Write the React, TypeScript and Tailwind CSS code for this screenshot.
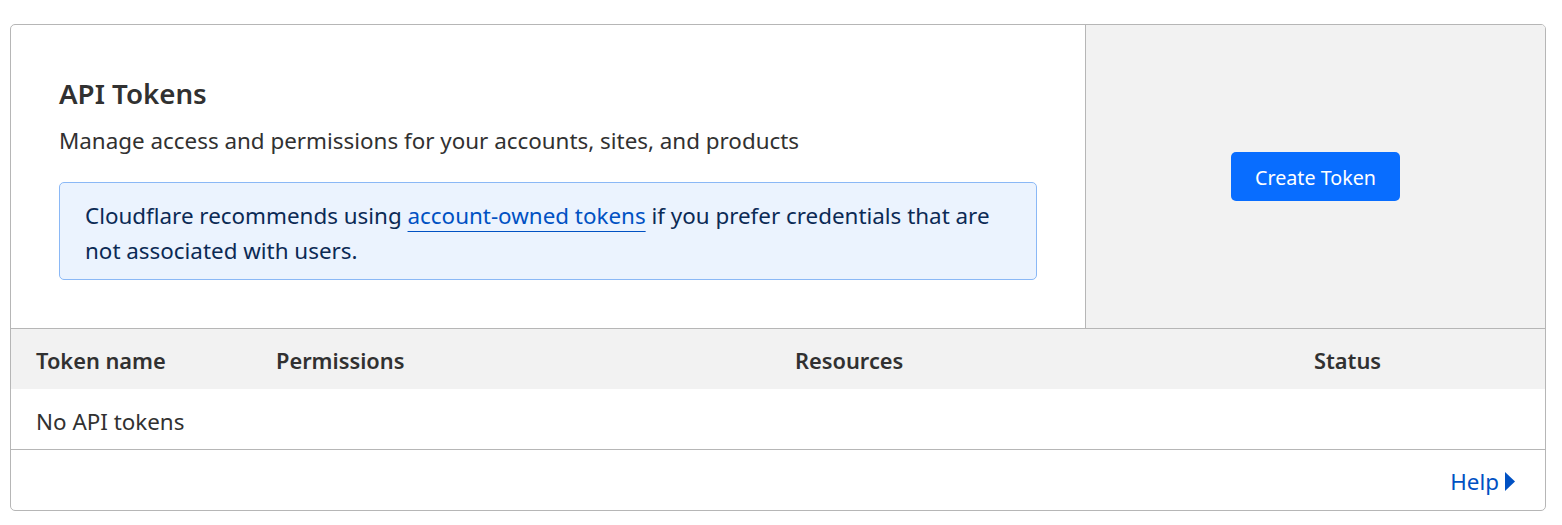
import { Fragment } from "react";

const columns = [
  { label: "Token name", width: "w-[240px]" },
  { label: "Permissions", width: "w-[519px]" },
  { label: "Resources", width: "w-[519px]" },
  { label: "Status", width: "flex-1" },
];

export default function App() {
  return (
    <div className="min-h-screen bg-white pl-[10px] pr-[16px] pt-[24px] font-['Noto_Sans',sans-serif] text-[#313131]">
      <div className="overflow-hidden rounded-[5px] border border-[#b6b6b6]">
        {/* Header block */}
        <div className="flex h-[304px] border-b border-[#b6b6b6]">
          <div className="flex w-[1075px] flex-col border-r border-[#b6b6b6] pl-[48px] pr-[48px] pt-[49px]">
            <h1 className="text-[27.7px] leading-[38px] font-semibold">API Tokens</h1>
            <p className="mt-[14px] text-[22.4px] leading-[30px]">
              Manage access and permissions for your accounts, sites, and products
            </p>
            <div className="mt-[26px] rounded-[5px] border border-[#8ab8f6] bg-[#ebf3fe] px-[25px] pt-[15px] pb-[11px] text-[22.4px] leading-[35px] text-[#0b2a55]">
              Cloudflare recommends using{" "}
              <a href="#" className="text-[#0051c3] underline decoration-1 underline-offset-[7px]">
                account-owned tokens
              </a>{" "}
              if you prefer credentials that are not associated with users.
            </div>
          </div>
          <div className="flex flex-1 items-center justify-center bg-[#f2f2f2]">
            <button className="h-[49px] rounded-[5px] bg-[#086dff] px-[24px] pt-[2px] text-[19.7px] text-white">
              Create Token
            </button>
          </div>
        </div>

        {/* Table */}
        <div className="flex h-[60px] items-center bg-[#f2f2f2] pt-[5px] text-[21.8px] font-semibold">
          {columns.map((c) => (
            <Fragment key={c.label}>
              <div className={`${c.width} pl-[25px]`}>{c.label}</div>
            </Fragment>
          ))}
        </div>
        <div className="flex h-[61px] items-center border-b border-[#b6b6b6] pl-[25px] pt-[5px] text-[22.4px]">
          No API tokens
        </div>

        {/* Footer */}
        <div className="flex h-[60px] items-center justify-end pr-[30px] pt-[4px]">
          <a href="#" className="flex items-center gap-[6px] text-[22.4px] text-[#0051c3]">
            Help
            <svg width="10" height="19" viewBox="0 0 10 19" fill="#0051c3">
              <path d="M0 0 L10 9.5 L0 19 Z" />
            </svg>
          </a>
        </div>
      </div>
    </div>
  );
}
